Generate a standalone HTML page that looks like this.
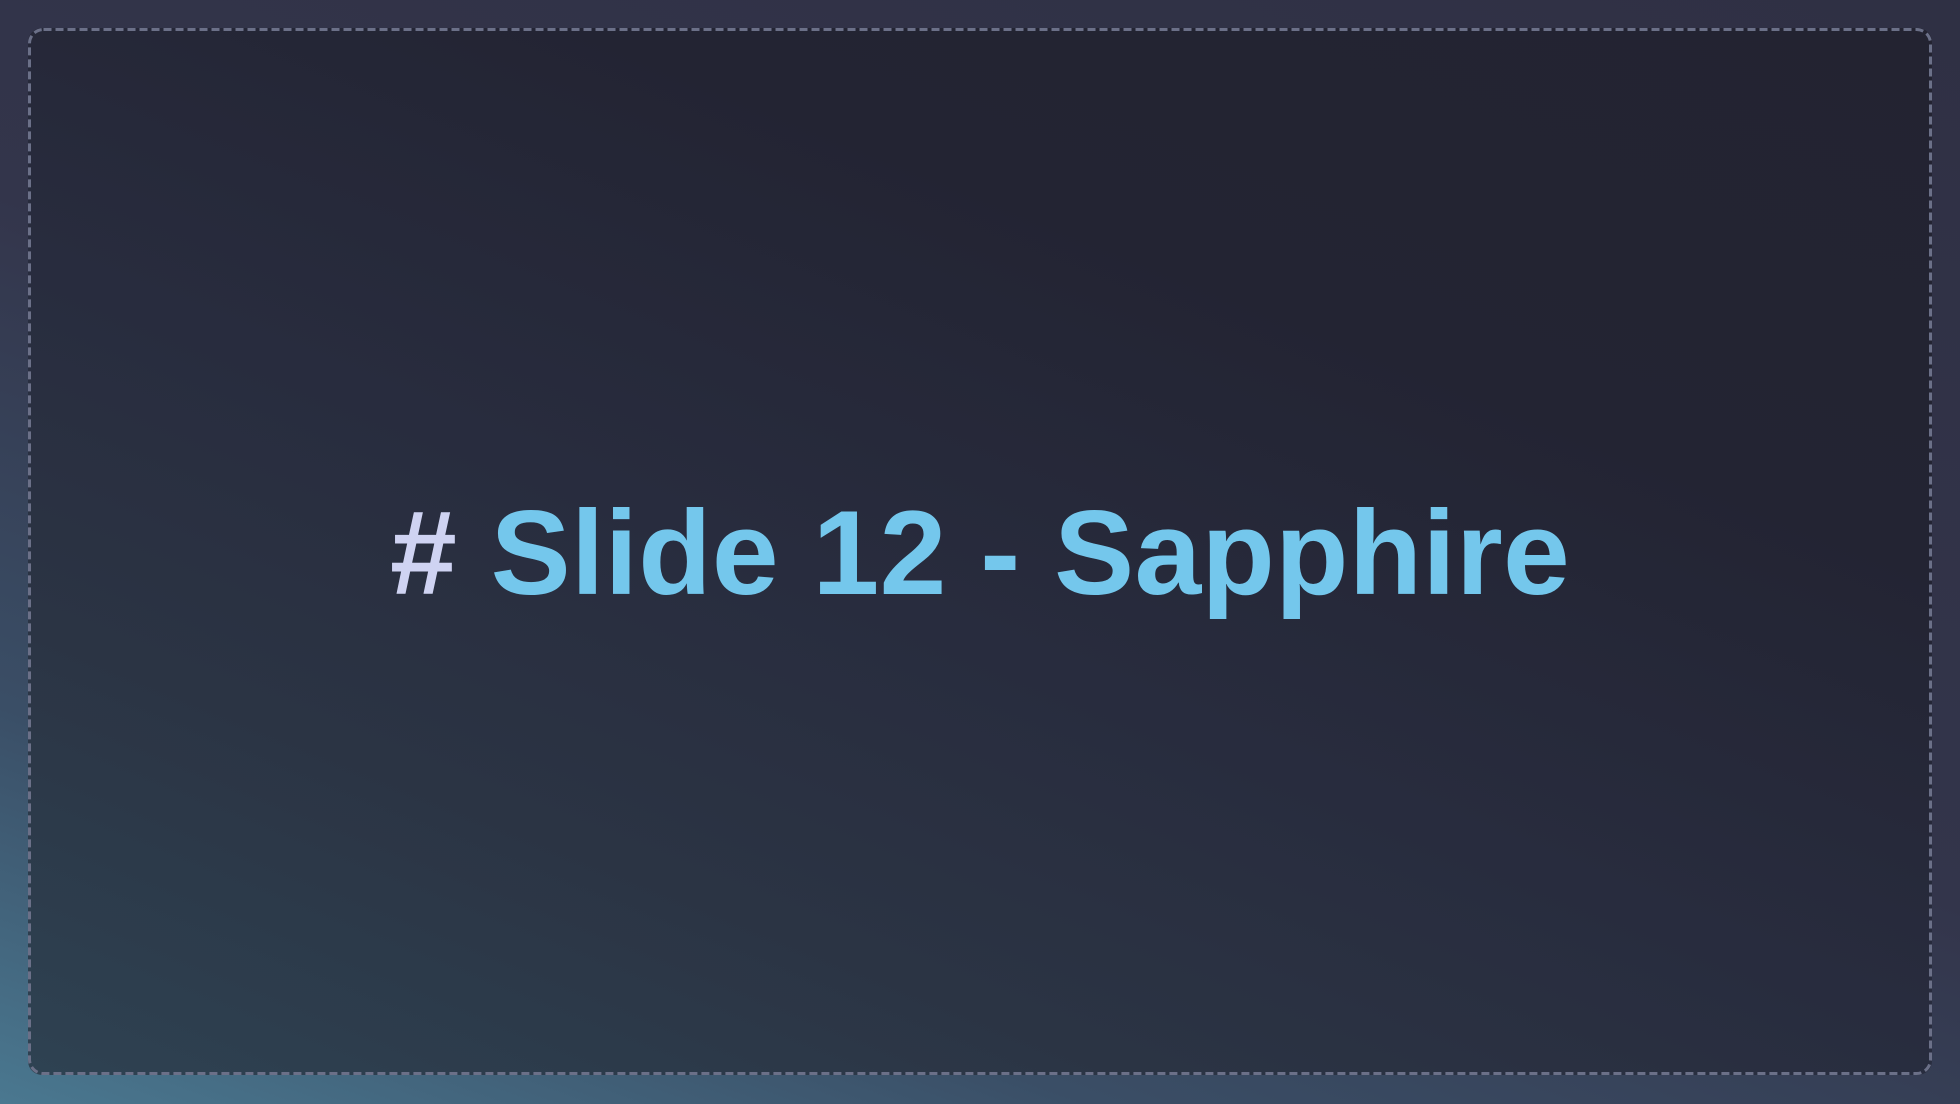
<!DOCTYPE html>
<html><head><meta charset="utf-8"><style>
html,body{margin:0;padding:0;width:1960px;height:1104px;overflow:hidden}
body{background:linear-gradient(20deg,#4a7890 0%,#3a4e66 22%,#33354b 50%,#2f3044 100%);position:relative;font-family:"Liberation Sans",sans-serif}
.card{position:absolute;left:28px;top:28px;width:1904px;height:1047px;border-radius:14px;
background:linear-gradient(22deg,#2e4252 0%,#2b3444 25%,#282c3e 45%,#232433 70%,#232331 100%)}
svg{position:absolute;left:0;top:0}
.t{position:absolute;left:0;width:1960px;top:483px;text-align:center;font-size:120px;font-weight:bold;color:#74c7ec;line-height:140px;white-space:nowrap;letter-spacing:0.3px}
.h{color:#cfd3f2}
</style></head><body>
<div class="card"></div>
<svg width="1960" height="1104"><rect x="29.5" y="29.5" width="1901" height="1044" rx="14" fill="none" stroke="#6b7088" stroke-width="3" stroke-dasharray="8 4"/></svg>
<div class="t"><span class="h">#</span> Slide 12 - Sapphire</div>
</body></html>
